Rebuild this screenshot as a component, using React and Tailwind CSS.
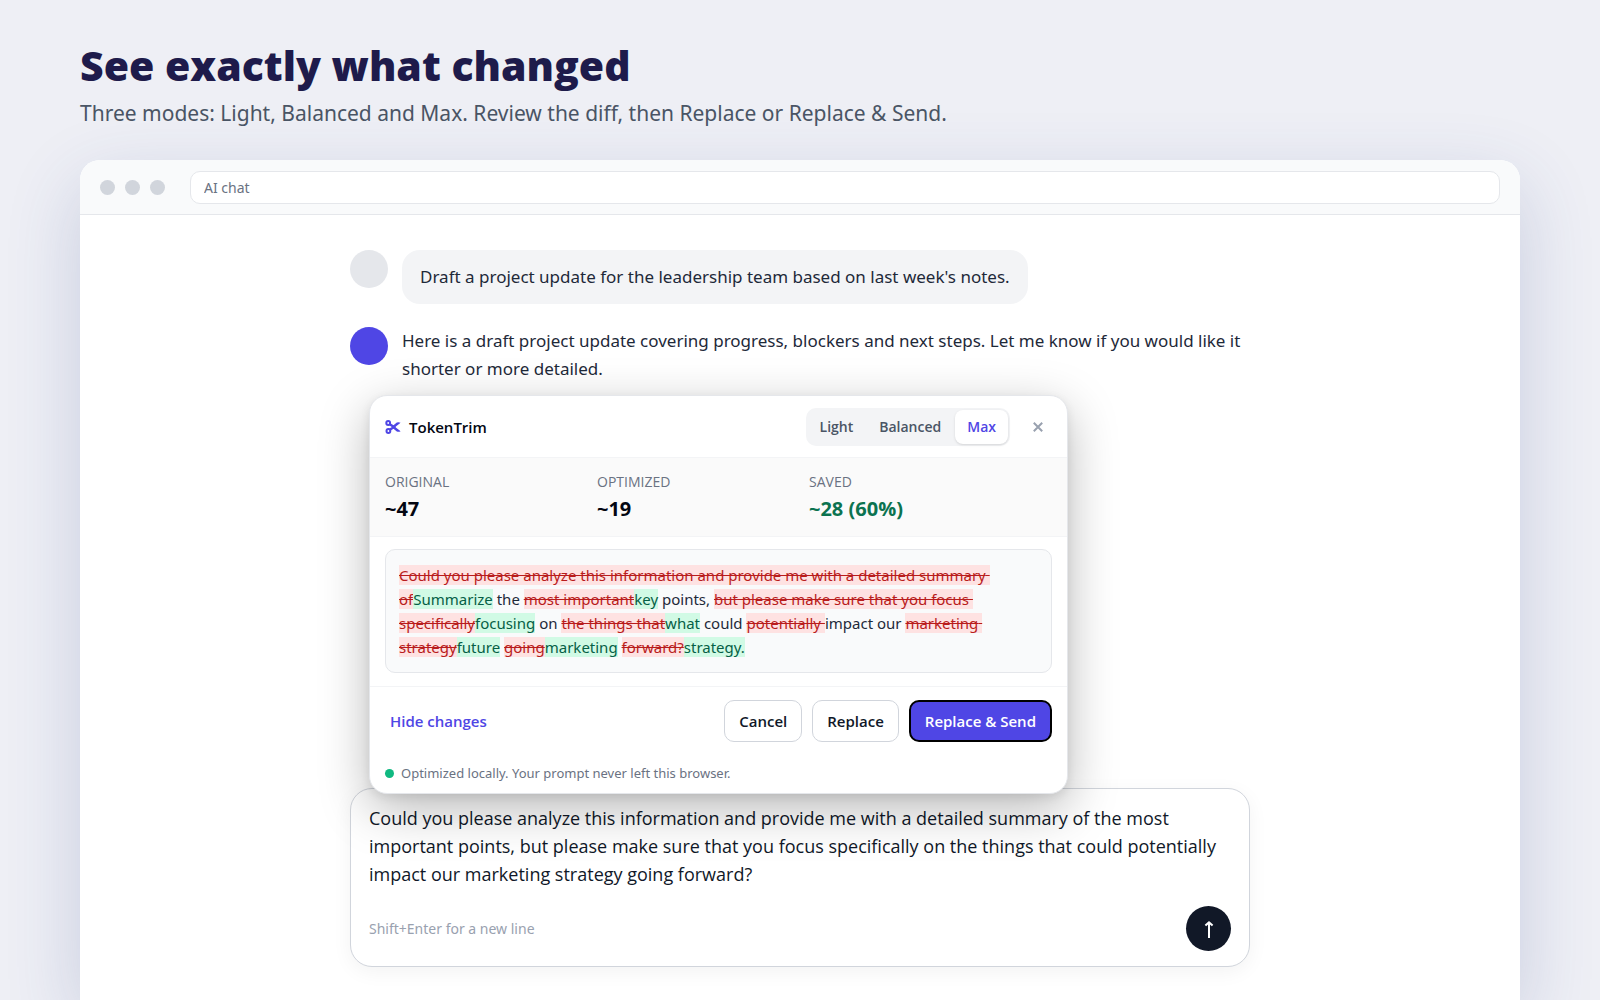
import { useState } from 'react'

const MODES = ['Light', 'Balanced', 'Max']

const STATS = [
  { label: 'ORIGINAL', value: '~47', color: 'text-gray-950' },
  { label: 'OPTIMIZED', value: '~19', color: 'text-gray-950' },
  { label: 'SAVED', value: '~28 (60%)', color: 'text-[#0b7350]' },
]

const DIFF = [
  ['del', 'Could you please analyze this information and provide me with a detailed summary of'],
  ['ins', 'Summarize'],
  ['same', ' the '],
  ['del', 'most important'],
  ['ins', 'key'],
  ['same', ' points, '],
  ['del', 'but please make sure that you focus specifically'],
  ['ins', 'focusing'],
  ['same', ' on '],
  ['del', 'the things that'],
  ['ins', 'what'],
  ['same', ' could '],
  ['del', 'potentially '],
  ['same', 'impact our '],
  ['del', 'marketing strategy'],
  ['ins', 'future'],
  ['same', ' '],
  ['del', 'going'],
  ['ins', 'marketing'],
  ['same', ' '],
  ['del', 'forward?'],
  ['ins', 'strategy.'],
]

const PROMPT =
  'Could you please analyze this information and provide me with a detailed summary of the most important points, but please make sure that you focus specifically on the things that could potentially impact our marketing strategy going forward?'

function ScissorsIcon() {
  return (
    <svg viewBox="0 0 16 14" className="w-4 h-[14px] text-[#4f46e5]" fill="none" stroke="currentColor" aria-hidden="true">
      <circle cx="3.2" cy="3" r="1.9" strokeWidth="2" />
      <circle cx="3.4" cy="11" r="1.9" strokeWidth="2" />
      <path d="M4.8 4.2 L9 7 L4.8 9.8" strokeWidth="2.4" />
      <path d="M6.4 7 L11.8 2.6 Q13.6 1.6 15.6 2.8 L10.2 7 L15.6 11.2 Q13.6 12.4 11.8 11.4 Z" fill="currentColor" stroke="none" />
    </svg>
  )
}

function CloseIcon() {
  return (
    <svg viewBox="0 0 10 10" className="w-[10px] h-[10px]" fill="none" stroke="currentColor" strokeWidth="2" aria-hidden="true">
      <path d="M0.8 0.8 L9.2 9.2 M9.2 0.8 L0.8 9.2" />
    </svg>
  )
}

function ArrowUpIcon() {
  return (
    <svg viewBox="0 0 12 20" className="w-3 h-5" fill="none" stroke="currentColor" strokeWidth="2" aria-hidden="true">
      <path d="M6 19 V4" />
      <path d="M2.4 6.6 L6 3.4 L9.6 6.6" />
    </svg>
  )
}

function DiffText() {
  return (
    <p className="text-[15px] leading-6 whitespace-pre-wrap text-gray-800">
      {DIFF.map(([kind, text], i) => {
        if (kind === 'del') return <del key={i} className="bg-[#fee2e2] text-[#b91c1c] line-through">{text}</del>
        if (kind === 'ins') return <ins key={i} className="bg-[#d1fae5] text-[#065f46] no-underline">{text}</ins>
        return <span key={i}>{text}</span>
      })}
    </p>
  )
}

function TrimPanel() {
  const [mode, setMode] = useState('Max')

  return (
    <section
      aria-label="TokenTrim"
      className="absolute left-[19px] bottom-full -mb-[6px] w-[699px] max-w-full bg-white border border-gray-200 rounded-[18px] overflow-hidden shadow-[0_15px_50px_rgba(0,0,0,0.28),0_3px_10px_rgba(0,0,0,0.08)]"
    >
      <header className="flex items-center justify-between h-[61px] px-[15px]">
        <div className="flex items-center gap-2">
          <ScissorsIcon />
          <h2 className="font-['Open_Sans',sans-serif] text-[15px] font-semibold text-gray-950">TokenTrim</h2>
        </div>
        <div className="flex items-center gap-[14px]">
          <div className="flex gap-[2px] bg-gray-100 rounded-[10px] p-[2px]">
            {MODES.map((m) => (
              <button
                key={m}
                onClick={() => setMode(m)}
                className={`h-[34px] px-3 rounded-lg font-['Open_Sans',sans-serif] text-sm font-semibold ${mode === m ? 'bg-white text-[#4f46e5] shadow-sm' : 'text-gray-600'}`}
              >
                {m}
              </button>
            ))}
          </div>
          <button aria-label="Close" className="flex items-center justify-center w-7 h-7 text-gray-400">
            <CloseIcon />
          </button>
        </div>
      </header>

      <dl className="grid grid-cols-[212px_212px_1fr] px-[15px] pt-3 pb-[13px] bg-[#fafafa] border-y border-gray-100">
        {STATS.map((s) => (
          <div key={s.label} className="flex flex-col gap-px">
            <dt className="font-['Open_Sans',sans-serif] text-sm leading-6 text-gray-500">{s.label}</dt>
            <dd className={`font-['Open_Sans',sans-serif] text-xl leading-7 font-bold ${s.color}`}>{s.value}</dd>
          </div>
        ))}
      </dl>

      <div className="px-[15px] pt-3 pb-[13px] border-b border-gray-100">
        <div className="px-[13px] py-[13px] bg-[#f9fafb] border border-gray-200 rounded-[10px]">
          <DiffText />
        </div>
      </div>

      <div className="flex items-center gap-[10px] px-[15px] pt-[13px] font-['Open_Sans',sans-serif] text-[15px] font-semibold">
        <button className="h-[42px] px-[5px] mr-auto text-[#4f46e5]">Hide changes</button>
        <button className="h-[42px] px-[14px] bg-white border border-gray-300 rounded-[10px] text-gray-900">Cancel</button>
        <button className="h-[42px] px-[14px] bg-white border border-gray-300 rounded-[10px] text-gray-900">Replace</button>
        <button className="h-[42px] px-[14px] bg-[#4f46e5] border-2 border-black rounded-[10px] text-white">Replace &amp; Send</button>
      </div>

      <p className="flex items-center gap-[7px] px-[15px] pt-5 pb-[9px] text-[13px] leading-[22px] text-gray-500">
        <span className="w-[9px] h-[9px] rounded-full bg-[#10b981]" />
        Optimized locally. Your prompt never left this browser.
      </p>
    </section>
  )
}

function Composer() {
  return (
    <div className="relative mt-auto mb-[33px]">
      <form
        onSubmit={(e) => e.preventDefault()}
        className="flex flex-col gap-[18px] px-[18px] py-[15px] bg-white border border-gray-300 rounded-[22px] shadow-[0_5px_20px_rgba(0,0,0,0.05)]"
      >
        <textarea
          aria-label="Message"
          rows={3}
          defaultValue={PROMPT}
          className="block w-full resize-none overflow-hidden outline-none font-['Open_Sans',sans-serif] text-lg leading-7 text-gray-900"
        />
        <div className="flex items-center justify-between">
          <span className="text-sm text-gray-400">Shift+Enter for a new line</span>
          <button aria-label="Send" className="flex items-center justify-center w-[45px] h-[45px] rounded-full bg-[#111827] text-white">
            <ArrowUpIcon />
          </button>
        </div>
      </form>
      <TrimPanel />
    </div>
  )
}

export default function App() {
  return (
    <div className="flex flex-col h-screen overflow-hidden px-20 pt-[38px] bg-[#eeeff5] font-['Noto_Sans',sans-serif]">
      <header>
        <h1 className="font-['Open_Sans',sans-serif] text-[41px] leading-[54px] font-extrabold text-[#1e1b4b]">See exactly what changed</h1>
        <p className="text-[21px] leading-[42px] text-gray-600">
          Three modes: Light, Balanced and Max. Review the diff, then Replace or Replace &amp; Send.
        </p>
      </header>

      <div className="flex-1 flex flex-col mt-[26px] bg-white rounded-t-[20px] shadow-[0_25px_75px_rgba(49,70,140,0.2)]">
        <div className="flex items-center gap-[25px] px-5 h-[55px] bg-gray-50 border-b border-gray-200 rounded-t-[20px]">
          <div className="flex gap-[10px]">
            <span className="w-[15px] h-[15px] rounded-full bg-gray-300" />
            <span className="w-[15px] h-[15px] rounded-full bg-gray-300" />
            <span className="w-[15px] h-[15px] rounded-full bg-gray-300" />
          </div>
          <input
            aria-label="Address"
            defaultValue="AI chat"
            className="flex-1 h-[33px] px-[13px] bg-white border border-gray-200 rounded-[10px] text-sm text-gray-500 outline-none"
          />
        </div>

        <main className="flex-1 flex flex-col w-full max-w-[900px] mx-auto pt-[35px] text-[17px] leading-7 text-gray-800">
          <div className="flex items-start gap-[14px]">
            <span className="shrink-0 w-[38px] h-[38px] rounded-full bg-gray-200" />
            <p className="px-[18px] py-[13px] bg-gray-100 rounded-[18px]">
              Draft a project update for the leadership team based on last week's notes.
            </p>
          </div>
          <div className="flex items-start gap-[14px] mt-[23px]">
            <span className="shrink-0 w-[38px] h-[38px] rounded-full bg-[#4f46e5]" />
            <p>
              Here is a draft project update covering progress, blockers and next steps. Let me know if you would like it
              shorter or more detailed.
            </p>
          </div>
          <Composer />
        </main>
      </div>
    </div>
  )
}
